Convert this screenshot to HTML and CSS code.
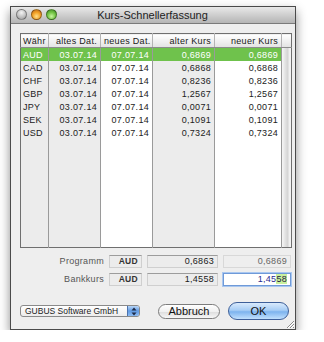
FILE: index.html
```html
<!DOCTYPE html>
<html lang="de">
<head>
    <meta charset="UTF-8">
    <title>Kurs-Schnellerfassung</title>
    <link rel="stylesheet" href="styles.css">
</head>
<body>
    <div class="window">
        <!-- Titelleiste -->
        <div class="titlebar">
            <div class="lights">
                <span class="light close"></span>
                <span class="light min"></span>
                <span class="light zoom"></span>
            </div>
            <div class="title">Kurs-Schnellerfassung</div>
        </div>

        <div class="content">
            <!-- Kurstabelle -->
            <table class="rates">
                <colgroup>
                    <col class="c-cur">
                    <col class="c-old">
                    <col class="c-new">
                    <col class="c-oldrate">
                    <col class="c-newrate">
                    <col class="c-track">
                </colgroup>
                <thead>
                    <tr>
                        <th class="left">Währ</th>
                        <th>altes Dat.</th>
                        <th>neues Dat.</th>
                        <th>alter Kurs</th>
                        <th>neuer Kurs</th>
                        <th class="corner"></th>
                    </tr>
                </thead>
                <tbody>
                    <tr class="selected">
                        <td class="left">AUD</td><td>03.07.14</td><td>07.07.14</td><td>0,6869</td><td>0,6869</td>
                        <td class="track" rowspan="8"></td>
                    </tr>
                    <tr><td class="left">CAD</td><td>03.07.14</td><td>07.07.14</td><td>0,6868</td><td>0,6868</td></tr>
                    <tr><td class="left">CHF</td><td>03.07.14</td><td>07.07.14</td><td>0,8236</td><td>0,8236</td></tr>
                    <tr><td class="left">GBP</td><td>03.07.14</td><td>07.07.14</td><td>1,2567</td><td>1,2567</td></tr>
                    <tr><td class="left">JPY</td><td>03.07.14</td><td>07.07.14</td><td>0,0071</td><td>0,0071</td></tr>
                    <tr><td class="left">SEK</td><td>03.07.14</td><td>07.07.14</td><td>0,1091</td><td>0,1091</td></tr>
                    <tr><td class="left">USD</td><td>03.07.14</td><td>07.07.14</td><td>0,7324</td><td>0,7324</td></tr>
                    <tr class="filler"><td></td><td></td><td></td><td></td><td></td></tr>
                </tbody>
            </table>

            <!-- Vergleich Programm / Bank -->
            <div class="compare">
                <div class="compare-row">
                    <span class="label">Programm</span>
                    <span class="field cur">AUD</span>
                    <span class="field value">0,6863</span>
                    <span class="field plain">0,6869</span>
                </div>
                <div class="compare-row">
                    <span class="label">Bankkurs</span>
                    <span class="field cur">AUD</span>
                    <span class="field value">1,4558</span>
                    <span class="field focus">1,45<span class="sel">58</span></span>
                </div>
            </div>

            <!-- Buttons -->
            <div class="actions">
                <div class="popup">
                    <span class="popup-text">GUBUS Software GmbH</span>
                    <span class="stepper">
                        <svg width="6" height="9" viewBox="0 0 6 9">
                            <path d="M3 0.5 L5.5 3.5 L0.5 3.5 Z" fill="#1d2a48"/>
                            <path d="M3 8.5 L5.5 5.5 L0.5 5.5 Z" fill="#1d2a48"/>
                        </svg>
                    </span>
                </div>
                <button class="btn">Abbruch</button>
                <button class="btn default">OK</button>
            </div>
        </div>

        <div class="grip">
            <svg width="10" height="10" viewBox="0 0 10 10">
                <path d="M9 2 L2 9 M9 5 L5 9 M9 8 L8 9" stroke="#8a8a8a" stroke-width="1"/>
                <path d="M9 3 L3 9 M9 6 L6 9" stroke="#ffffff" stroke-width="1"/>
            </svg>
        </div>
    </div>
</body>
</html>
```

FILE: styles.css
```css
body {
    margin: 0;
    background: #ffffff;
    font-family: "Liberation Sans", Arial, sans-serif;
    color: #1a1a1a;
}
.window {
    position: relative;
    box-sizing: border-box;
    width: 286px;
    height: 324px;
    margin: 6px 0 0 10px;
    border: 1px solid #4a4a4a;
    background: #eeeeee;
    box-shadow: 0 5px 10px rgba(0, 0, 0, 0.45);
    display: flex;
    flex-direction: column;
}
.titlebar {
    position: relative;
    height: 16px;
    flex: none;
    background: linear-gradient(#e9e9e9, #c9c9c9 60%, #b5b5b5);
    border-bottom: 1px solid #7a7a7a;
    display: flex;
    align-items: center;
    justify-content: center;
}
.lights {
    position: absolute;
    left: 5px;
    top: 2px;
    display: flex;
    gap: 4px;
}
.light {
    width: 11px;
    height: 11px;
    border-radius: 50%;
    border: 1px solid rgba(0, 0, 0, 0.35);
    box-sizing: border-box;
}
.light.close {
    background: radial-gradient(circle at 50% 30%, #f4f4f4, #bdbdbd 60%, #9a9a9a);
}
.light.min {
    background: radial-gradient(circle at 50% 70%, #ffe08a, #f2a126 50%, #b5651b);
}
.light.zoom {
    background: radial-gradient(circle at 50% 70%, #c8f5a0, #73c545 50%, #3f8a25);
}
.title {
    font-size: 11px;
    color: #222;
    line-height: 16px;
    margin-left: -1px;
}
.content {
    flex: 1;
    padding: 9px 4px 0 9px;
    display: flex;
    flex-direction: column;
}

/* Tabelle */
.rates {
    width: 271px;
    height: 215px;
    table-layout: fixed;
    border-collapse: collapse;
    border: 1px solid #6f6f6f;
    font-size: 9px;
    letter-spacing: 0.3px;
}
.c-cur { width: 28px; background: #ececec; }
.c-old { width: 52px; background: #ececec; }
.c-new { width: 52px; background: #ffffff; }
.c-oldrate { width: 62px; background: #ececec; }
.c-newrate { width: 67px; background: #ffffff; }
.c-track { width: 10px; }
.rates th {
    height: 13px;
    padding: 0 3px;
    font-weight: normal;
    text-align: right;
    background: linear-gradient(#ffffff, #f1f1f1 50%, #e2e2e2);
    border-right: 1px solid #b4b4b4;
    border-bottom: 1px solid #8c8c8c;
    white-space: nowrap;
    overflow: hidden;
}
.rates td {
    height: 13px;
    padding: 0 3px;
    text-align: right;
    border-right: 1px solid #9a9a9a;
    white-space: nowrap;
    color: #222;
}
.rates .left {
    text-align: left;
    padding-left: 2px;
}
.rates .selected td {
    background: #6fc24c;
    color: #ffffff;
}
.rates .selected td.track {
    background: linear-gradient(to right, #f4f4f4, #d2d2d2 60%, #f3f3f3 75%);
    border-right: none;
}
.rates .filler td {
    height: auto;
}
.rates th.corner {
    border-right: none;
    padding: 0;
}

/* Vergleich */
.compare {
    margin-top: 7px;
    display: flex;
    flex-direction: column;
    gap: 5px;
    font-size: 9px;
}
.compare-row {
    display: flex;
    gap: 5px;
    height: 13px;
    align-items: stretch;
}
.label {
    width: 84px;
    text-align: right;
    color: #555;
    line-height: 13px;
    letter-spacing: 0.3px;
}
.field {
    box-sizing: border-box;
    line-height: 11px;
    text-align: right;
    padding: 0 3px;
    border: 1px solid #cfcfcf;
    border-top-color: #9c9c9c;
    background: #ececec;
    letter-spacing: 0.3px;
}
.field.cur {
    width: 33px;
    font-weight: bold;
    color: #333;
    font-size: 8.5px;
}
.field.value {
    width: 71px;
}
.field.plain {
    width: 68px;
    border-color: #d8d8d8;
    background: #eeeeee;
    color: #666;
}
.field.focus {
    width: 68px;
    background: #ffffff;
    color: #2b2b8f;
    border: 1px solid #6f9ad8;
    box-shadow: 0 0 0 1px #a9c7f0;
}
.field.focus .sel {
    background: #c9f09e;
    color: #224;
}

/* Buttons */
.actions {
    margin-top: 16px;
    display: flex;
    align-items: center;
    height: 18px;
}
.popup {
    box-sizing: border-box;
    width: 120px;
    height: 12px;
    border: 1px solid #8a8a8a;
    border-radius: 3px;
    background: linear-gradient(#ffffff, #ececec);
    display: flex;
    align-items: center;
    overflow: hidden;
}
.popup-text {
    flex: 1;
    font-size: 8.5px;
    padding-left: 4px;
    color: #222;
    white-space: nowrap;
}
.stepper {
    width: 11px;
    height: 100%;
    background: linear-gradient(#b9d6f7, #5f9ae3 50%, #8dbcf2);
    border-left: 1px solid #4b72ad;
    display: flex;
    align-items: center;
    justify-content: center;
}
.btn {
    font-family: "Liberation Sans", Arial, sans-serif;
    font-size: 11px;
    padding: 0;
    color: #111;
    border-radius: 8px;
    box-sizing: border-box;
}
.btn {
    margin-left: 18px;
    width: 62px;
    height: 15px;
    border: 1px solid #7c7c7c;
    background: linear-gradient(#ffffff, #f0f0f0 50%, #dedede 55%, #f7f7f7);
    line-height: 13px;
}
.btn.default {
    margin-left: 8px;
    width: 61px;
    height: 18px;
    border-radius: 9px;
    border-color: #3d5f99;
    background: linear-gradient(#d9eafc, #a7cdf5 45%, #7db3ee 55%, #c1e0fd);
    line-height: 16px;
}
.grip {
    position: absolute;
    right: 0;
    bottom: 0;
    width: 10px;
    height: 10px;
}
.grip svg {
    display: block;
}
```
